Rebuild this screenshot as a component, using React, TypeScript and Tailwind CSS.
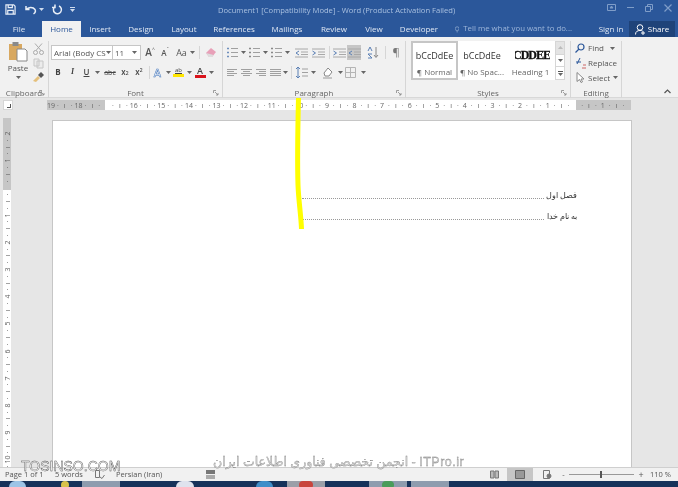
import React from "react";

const C = "#808080";
const Caret = ({ c = "#666" }: { c?: string }) => (
  <svg width="5" height="3" viewBox="0 0 5 3" className="shrink-0"><path d="M0 0h5L2.5 3z" fill={c} /></svg>
);
const Ic = ({ children, w = 13, h = 13 }: { children: React.ReactNode; w?: number; h?: number }) => (
  <svg width={w} height={h} viewBox={`0 0 ${w} ${h}`} className="shrink-0" fill="none" stroke={C} strokeWidth="1">{children}</svg>
);
const Launcher = () => (
  <svg width="6" height="6" viewBox="0 0 6 6" fill="none" stroke="#888" strokeWidth="0.8"><path d="M.5 3V.5H3M2 2l3 3M5 3v2H3" /></svg>
);
const Slot = ({ w, children, className = "" }: { w: number; children?: React.ReactNode; className?: string }) => (
  <div style={{ width: w }} className={`flex items-center justify-center shrink-0 h-[14px] ${className}`}>{children}</div>
);
const Group = ({ w, label, children }: { w: number; label: string; children: React.ReactNode }) => (
  <div style={{ width: w }} className="relative shrink-0 h-[57px] flex flex-col border-r border-[#d6d6d6]">
    <div className="flex-1 min-h-0">{children}</div>
    <div className="h-[11px] flex items-center justify-center text-[8px] leading-none text-[#666]">{label}</div>
    {label !== "Editing" ? (
      <div className="absolute right-[3px] bottom-[2px] flex"><Launcher /></div>
    ) : null}
  </div>
);
const LinesIcon = ({ kind }: { kind: "l" | "c" | "r" | "j" }) => {
  const rows: [number, number][] =
    kind === "l" ? [[1, 11], [1, 8], [1, 11], [1, 8]] :
    kind === "c" ? [[1, 12], [3, 10], [1, 12], [3, 10]] :
    kind === "r" ? [[2, 12], [5, 12], [2, 12], [5, 12]] :
    [[1, 12], [1, 12], [1, 12], [1, 12]];
  return (
    <Ic>
      {rows.map(([a, b], i) => <path key={i} d={`M${a} ${3.5 + i * 2}H${b}`} stroke="#a0a0a0" />)}
    </Ic>
  );
};
const ListIcon = ({ n }: { n?: boolean }) => (
  <Ic>
    {[2.5, 6.5, 10.5].map((y) => (
      <g key={y}>
        <path d={`M1 ${y}h2`} stroke={n ? "#888" : "#6f8fbd"} strokeWidth="1.4" />
        <path d={`M5 ${y}h7`} stroke="#a0a0a0" />
      </g>
    ))}
  </Ic>
);
const Indent = ({ rev }: { rev?: boolean }) => (
  <Ic w={15}>
    <path d="M1 3h13M7 6h7M7 8.5h7M1 11h13" stroke="#a8a8a8" />
    <path d={rev ? "M5 5L2 7l3 2" : "M1.5 5l3 2-3 2"} stroke="#5b80b5" />
  </Ic>
);

const tabs: [string, number][] = [["Insert", 38], ["Design", 44], ["Layout", 42], ["References", 58], ["Mailings", 48], ["Review", 46], ["View", 34], ["Developer", 56]];
const hNums: string[] = ["19", "18", "", "16", "15", "14", "13", "12", "11", "10", "9", "8", "7", "6", "5", "4", "3", "2", "1", "", "1"];
const vNums: string[] = ["2", "1", "", "1", "2", "3", "4", "5", "6", "7", "8", "9", "10"];

const HRuler = () => (
  <div className="flex h-[10px] items-center text-[7px] leading-none text-[#555]">
    {hNums.map((n, i) => (
      <div key={i} className="flex w-[27.6px] shrink-0">
        {[n, "·", "ı", "·"].map((t, j) => (
          <span key={j} className="w-[6.9px] flex justify-center whitespace-nowrap text-[#666]">{t}</span>
        ))}
      </div>
    ))}
  </div>
);
const VRuler = () => (
  <div className="w-[8px] ml-[3px] h-full shrink-0 bg-white relative overflow-hidden text-[7px] leading-none text-[#555]">
    <div className="h-[72px] bg-[#c6c6c6] -mb-[72px]" />
    <div className="pt-[12px] relative">
      {vNums.map((n, i) => (
        <div key={i} className="flex flex-col w-full h-[27.2px]">
          {[n, "·", "ı", "·"].map((t, j) => (
            <span key={j} className="h-[6.8px] flex items-center justify-center -rotate-90 text-[#666]">{t}</span>
          ))}
        </div>
      ))}
    </div>
  </div>
);

const StyleBox = ({ w, label, sel, children }: { w: number; label: string; sel?: boolean; children: React.ReactNode }) => (
  <div style={{ width: w }} className={`shrink-0 h-full flex flex-col items-center overflow-hidden border-[2px] ${sel ? "border-[#c6c6c6]" : "border-white"}`}>
    <div className="h-[20px] flex items-end justify-center overflow-hidden w-full">{children}</div>
    <div className="mt-[5px] text-[8px] leading-none text-[#666] whitespace-nowrap">{label}</div>
  </div>
);

export default function App() {
  return (
    <div className="w-[678px] h-[487px] overflow-hidden relative flex flex-col bg-[#e6e6e6] blur-[0.3px] font-['Open_Sans','Liberation_Sans',sans-serif]">
      {/* Title bar */}
      <div className="h-[37px] shrink-0 bg-[#2b579a] flex flex-col text-white">
        <div className="h-[21px] flex items-center">
          <div className="flex items-center pl-[5px] w-[80px] shrink-0 h-full pb-[2px]">
            <svg width="11" height="11" viewBox="0 0 12 12" fill="none" stroke="#e8eef7" strokeWidth="1.3"><path d="M1 1h8.5L11 2.5V11H1zM3.5 1v3h4.5V1M3 11V7h6v4" /></svg>
            <svg className="ml-[9px]" width="12" height="10" viewBox="0 0 12 10" fill="none" stroke="#e8eef7" strokeWidth="1.5"><path d="M1 1v3.5h3.5M1.5 4.5C3 2 8 1.5 10 4.5c1 2 0 3.5-1.500 4.500" /></svg>
            <div className="ml-[2px]"><Caret c="#cfdcee" /></div>
            <svg className="ml-[8px]" width="11" height="11" viewBox="0 0 11 11" fill="none" stroke="#e8eef7" strokeWidth="1.5"><path d="M3 2.500A4 4 0 1 0 7 2M3 .5v3H0" /></svg>
            <div className="ml-[7px] flex flex-col items-center gap-[1px]"><div className="w-[5px] h-px bg-[#cfdcee]" /><Caret c="#cfdcee" /></div>
          </div>
          <div className="ml-[138px] text-[7.600px] leading-none text-[#a9c0e0] whitespace-nowrap pt-[1px]">Document1 [Compatibility Mode] - Word (Product Activation Failed)</div>
          <div className="ml-auto flex items-center pr-[6px] gap-[11px] h-full pb-[6px]">
            <svg width="9" height="7" viewBox="0 0 9 7" fill="none" stroke="#7f9dc8"><path d="M.5.5h8v6h-8z" /><path d="M3 4l1.500-2L6 4z" fill="#7f9dc8" /></svg>
            <div className="w-[7px] h-px bg-[#7f9dc8]" />
            <svg width="8" height="8" viewBox="0 0 8 8" fill="none" stroke="#7f9dc8"><path d="M.5 2.500h5v5h-5zM2.500 2.500v-2h5v5h-2" /></svg>
            <svg width="8" height="8" viewBox="0 0 8 8" fill="none" stroke="#7f9dc8" strokeWidth="1.200"><path d="M.5.5l7 7M7.500.5l-7 7" /></svg>
          </div>
        </div>
        <div className="h-[16px] flex items-stretch text-[8px] leading-none text-[#dfe7f3]">
          <div className="w-[38px] shrink-0 flex items-center justify-center">File</div>
          <div className="ml-[4px] w-[39px] shrink-0 flex items-center justify-center bg-[#f1f1f1] text-[#2b579a]">Home</div>
          {tabs.map(([t, w]) => (
            <div key={t} style={{ width: w }} className="flex items-center justify-center shrink-0">{t}</div>
          ))}
          <div className="ml-[8px] w-[117px] shrink-0 flex items-center text-[#9db6da] whitespace-nowrap">
            <svg width="8" height="11" viewBox="0 0 8 11" fill="none" stroke="#b9cbe5"><path d="M2.500 8C2 6 .5 5.500.5 3.500a3.500 3 0 0 1 7 0C7.500 5.500 6 6 5.500 8zM3 10h2" /></svg>
            <span className="ml-[4px] text-[7.800px]">Tell me what you want to do...</span>
          </div>
          <div className="ml-[24px] w-[30px] shrink-0 flex items-center justify-center whitespace-nowrap">Sign in</div>
          <div className="ml-[3px] w-[46px] bg-[#1f4379] flex items-center justify-center gap-[3px] shrink-0">
            <svg width="10" height="11" viewBox="0 0 10 11" fill="none" stroke="#fff" strokeWidth="1"><circle cx="5" cy="3.500" r="2.800" /><path d="M.5 10.500c0-3 2-4 4.500-4s2.500.5 2.500.5M6 9h4M8 7v4" /></svg>
            <span className="text-white">Share</span>
          </div>
        </div>
      </div>

      {/* Ribbon */}
      <div className="h-[61px] shrink-0 bg-[#f1f1f1] flex pt-[4px] text-[#555] border-b border-[#d8d8d8]">
        <Group w={49} label="Clipboard">
          <div className="flex">
            <div className="w-[31px] shrink-0 flex flex-col items-center pl-[5px]">
              <svg width="20" height="21" viewBox="0 0 20 21"><rect x="1" y="3" width="13" height="16" fill="#d8a860" /><rect x="4.500" y="1" width="6" height="4" fill="#8a8a8a" /><path d="M9 8h8l2 2v10H9z" fill="#fff" stroke="#888" /></svg>
              <div className="text-[8px] leading-none text-[#555] mt-[2px]">Paste</div>
              <div className="mt-[4px]"><Caret /></div>
            </div>
            <div className="flex flex-col items-center w-[14px] gap-[3px] mt-[2px]">
              <svg width="11" height="12" viewBox="0 0 11 12" fill="none" stroke="#aaa"><path d="M2 .5l6 7M9 .5l-6 7" /><circle cx="2.500" cy="9.500" r="2" /><circle cx="8.500" cy="9.500" r="2" /></svg>
              <svg width="11" height="11" viewBox="0 0 11 11" fill="#ececec" stroke="#c6c6c6"><path d="M1 1h5v7H1zM4 3h6v7H4z" /></svg>
              <svg width="11" height="10" viewBox="0 0 11 10"><path d="M0 9l5-5 2 2-4 4z" fill="#e5c07b" /><path d="M5 3l3-3 3 3-3 3z" fill="#555" /></svg>
            </div>
          </div>
        </Group>

        <Group w={174} label="Font">
          <div className="pl-[2px] pt-[4px] flex flex-col gap-[5px]">
            <div className="flex items-center h-[15px]">
              <div className="w-[62px] h-[15px] shrink-0 bg-white border border-[#c6c6c6] flex items-center justify-between px-[2px] text-[8px] leading-none text-[#555] whitespace-nowrap">Arial (Body CS<Caret /></div>
              <div className="w-[28px] h-[15px] shrink-0 bg-white border border-l-0 border-[#c6c6c6] flex items-center justify-between px-[2px] pr-[3px] text-[8px] leading-none text-[#555]">11<Caret /></div>
              <Slot w={16} className="ml-[1px] text-[10px]"><span className="font-semibold">A</span><span className="text-[5px] mb-[5px]">^</span></Slot>
              <Slot w={14} className="text-[8px]"><span className="font-semibold">A</span><span className="text-[5px] mb-[5px]">ˇ</span></Slot>
              <Slot w={27} className="text-[9px] gap-[3px]"><span>Aa</span><Caret /></Slot>
              <div className="w-px h-[13px] bg-[#d6d6d6]" />
              <Slot w={22}>
                <svg width="12" height="11" viewBox="0 0 12 11"><path d="M1 6l5-5 5 4-4 5H4z" fill="#e8a0b8" /><path d="M1 6l3 4h3l1.500-2z" fill="#ddd" /></svg>
              </Slot>
            </div>
            <div className="flex items-center h-[14px] text-[8px] text-[#444] leading-none">
              <Slot w={14} className="font-bold">B</Slot>
              <Slot w={15} className="italic font-semibold font-['Liberation_Serif',serif]">I</Slot>
              <Slot w={13} className="underline font-semibold">U</Slot>
              <Slot w={9}><Caret /></Slot>
              <Slot w={16} className="line-through text-[7px]">abc</Slot>
              <Slot w={14} className="font-semibold">x<sub className="text-[5px]">2</sub></Slot>
              <Slot w={14} className="font-semibold">x<sup className="text-[5px]">2</sup></Slot>
              <div className="ml-[3px] w-px h-[13px] bg-[#d6d6d6]" />
              <Slot w={15} className="text-[11px] font-semibold"><span className="[-webkit-text-stroke:0.5px_#3f72b8] text-[#e4ecf7]">A</span></Slot>
              <Slot w={6}><Caret /></Slot>
              <Slot w={15}>
                <div className="flex flex-col items-center"><span className="text-[6px] leading-none underline">ab</span><div className="w-[11px] h-[3px] bg-[#ffe600] mt-[1px]" /></div>
              </Slot>
              <Slot w={6}><Caret /></Slot>
              <Slot w={16}>
                <div className="flex flex-col items-center"><span className="text-[9px] leading-none font-semibold text-[#444]">A</span><div className="w-[11px] h-[3px] bg-[#d9141c]" /></div>
              </Slot>
              <Slot w={6}><Caret /></Slot>
            </div>
          </div>
        </Group>

        <Group w={183} label="Paragraph">
          <div className="pt-[4px] flex flex-col gap-[5px]">
            <div className="flex items-center h-[15px] pl-[2px]">
              <Slot w={14}><ListIcon /></Slot><Slot w={8}><Caret /></Slot>
              <Slot w={14}><ListIcon n /></Slot><Slot w={8}><Caret /></Slot>
              <Slot w={14}><ListIcon n /></Slot><Slot w={8}><Caret /></Slot>
              <div className="w-[3px]" />
              <Slot w={17}><Indent rev /></Slot>
              <Slot w={17}><Indent /></Slot>
              <div className="w-[8px] flex justify-center"><div className="w-px h-[13px] bg-[#d6d6d6]" /></div>
              <Slot w={16}><Indent /></Slot>
              <Slot w={14} className="bg-[#c6c6c6] h-[15px]"><Indent rev /></Slot>
              <div className="w-[3px]" />
              <Slot w={21}>
                <svg width="13" height="13" viewBox="0 0 13 13" fill="none"><path d="M9 1v10M7 9l2 2.500L11 9" stroke="#888" /><path d="M1 5l2-4 2 4M1 12h4L1 8h4" stroke="#5b80b5" /></svg>
              </Slot>
              <div className="w-[5px] flex justify-center"><div className="w-px h-[13px] bg-[#d6d6d6]" /></div>
              <Slot w={18} className="text-[11px] text-[#777]">¶</Slot>
            </div>
            <div className="flex items-center h-[14px] pl-[2px]">
              <Slot w={14}><LinesIcon kind="l" /></Slot>
              <Slot w={14}><LinesIcon kind="c" /></Slot>
              <Slot w={15}><LinesIcon kind="r" /></Slot>
              <Slot w={14}><LinesIcon kind="j" /></Slot>
              <Slot w={6}><Caret /></Slot>
              <div className="w-[6px] flex justify-center"><div className="w-px h-[13px] bg-[#d6d6d6]" /></div>
              <Slot w={15}>
                <svg width="13" height="13" viewBox="0 0 13 13" fill="none"><path d="M3 1v11M1 3l2-2 2 2M1 10l2 2 2-2" stroke="#5b80b5" /><path d="M7 3h6M7 6.500h6M7 10h6" stroke="#a0a0a0" /></svg>
              </Slot>
              <Slot w={8}><Caret /></Slot>
              <div className="w-[3px]" />
              <Slot w={17}>
                <svg width="13" height="13" viewBox="0 0 13 13" fill="none" stroke="#888"><path d="M2 7l4-5 4 4-3 4H3z" fill="#fff" /><path d="M1 12h9" stroke="#c6c6c6" strokeWidth="2" /></svg>
              </Slot>
              <Slot w={6}><Caret /></Slot>
              <Slot w={15}>
                <svg width="11" height="11" viewBox="0 0 11 11" fill="none" stroke="#b5b5b5"><path d="M.5.5h10v10H.5zM5.500.5v10M.5 5.500h10" /></svg>
              </Slot>
              <Slot w={10}><Caret /></Slot>
            </div>
          </div>
        </Group>

        <Group w={165} label="Styles">
          <div className="pl-[5px] flex h-[39px]">
            <div className="w-[144px] h-[39px] bg-white flex shrink-0 overflow-hidden text-[#333]">
              <StyleBox w={47} label="¶ Normal" sel><span className="text-[9px] leading-[14px]">bCcDdEe</span></StyleBox>
              <StyleBox w={48} label="¶ No Spac..."><span className="text-[9px] leading-[14px]">bCcDdEe</span></StyleBox>
              <StyleBox w={49} label="Heading 1">
                <div className="w-[35px] mr-[3px] ml-auto flex justify-end overflow-hidden"><span className="text-[12px] leading-[15px] font-bold text-[#111] tracking-[-1px] font-['Liberation_Serif',serif] whitespace-nowrap [-webkit-text-stroke:0.3px_#111]">CDDEE</span></div>
              </StyleBox>
            </div>
            <div className="w-[10px] h-[39px] flex flex-col shrink-0 border border-[#d6d6d6] bg-white">
              <div className="flex-1 bg-[#e4e4e4] flex items-center justify-center"><div className="rotate-180 flex"><Caret c="#bbb" /></div></div>
              <div className="flex-1 flex items-center justify-center border-y border-[#d6d6d6]"><Caret /></div>
              <div className="flex-1 flex flex-col items-center justify-center gap-[1px]"><div className="w-[5px] h-px bg-[#555]" /><Caret /></div>
            </div>
          </div>
        </Group>

        <Group w={51} label="Editing">
          <div className="pl-[4px] flex flex-col text-[8px] leading-none text-[#555] whitespace-nowrap">
            <div className="flex items-center h-[14px] gap-[3px]">
              <svg width="10" height="10" viewBox="0 0 10 10" fill="none" stroke="#2b579a" strokeWidth="1.200"><circle cx="6" cy="4" r="3" /><path d="M4 6L.5 9.500" /></svg>
              <span>Find</span><span className="ml-[3px] flex"><Caret /></span>
            </div>
            <div className="flex items-center h-[15px] gap-[1px]">
              <svg width="12" height="12" viewBox="0 0 12 12" fill="none"><path d="M2 7l3-6" stroke="#2b579a" /><path d="M8 8h3M7 11h4" stroke="#c66" /><path d="M1 5h5" stroke="#2b579a" /></svg>
              <span>Replace</span>
            </div>
            <div className="flex items-center h-[15px] gap-[3px] pl-[1px]">
              <svg width="9" height="11" viewBox="0 0 9 11" fill="#fff" stroke="#888"><path d="M1 .5v9l2.500-2 1.500 3 1.500-.7L5 7h3z" /></svg>
              <span>Select</span><Caret />
            </div>
          </div>
        </Group>

        <div className="flex-1 flex items-end justify-end pr-[7px] pb-[3px]">
          <svg width="7" height="5" viewBox="0 0 7 5" fill="none" stroke="#555" strokeWidth="1.200"><path d="M.5 4L3.500 1l3 3" /></svg>
        </div>
      </div>

      {/* Document area */}
      <div className="flex-1 min-h-0 flex flex-col">
        <div className="h-[20px] shrink-0 flex items-start pt-[2px]">
          <div className="ml-[3px] w-[10px] h-[10px] shrink-0 bg-white border border-[#d6d6d6] flex items-end justify-end p-[1px]">
            <div className="w-[4px] h-[4px] border-r border-b border-[#555]" />
          </div>
          <div className="ml-[34px] w-[584px] h-[10px] shrink-0 bg-[#c6c6c6] overflow-hidden relative">
            <div className="absolute left-[58px] w-[471px] top-0 bottom-0 bg-white" />
            <div className="relative ml-[0.5px]"><HRuler /></div>
          </div>
        </div>
        <div className="flex-1 min-h-0 flex">
          <VRuler />
          <div className="ml-[41px] mt-[2px] w-[580px] bg-white border border-[#c6c6c6] border-b-0 h-[400px] shrink-0 pt-[69px] pl-[249px] pr-[54px] text-[#333] font-['Liberation_Sans',sans-serif]">
            <div className="flex items-center h-[11px]">
              <div className="flex-1 border-b border-dotted border-[#999] mt-[6px]" />
              <div dir="rtl" className="w-[33px] whitespace-nowrap leading-none text-[8px]">فصل اول</div>
            </div>
            <div className="flex items-center h-[11px] mt-[10px]">
              <div className="flex-1 border-b border-dotted border-[#999] mt-[6px]" />
              <div dir="rtl" className="w-[33px] whitespace-nowrap leading-none text-[7.500px]">به نام خدا</div>
            </div>
          </div>
        </div>
      </div>

      {/* Status bar */}
      <div className="h-[14px] shrink-0 bg-[#f1f1f1] border-t border-[#cfcfcf] flex items-center text-[7.500px] leading-none text-[#555] whitespace-nowrap">
        <span className="ml-[5px] w-[50px] shrink-0">Page 1 of 1</span>
        <span className="w-[40px] shrink-0">5 words</span>
        <svg width="10" height="9" viewBox="0 0 10 9" fill="none" stroke="#777"><path d="M.5.5h4v7h-4zM5 7l2 1.500L9.500 5" /></svg>
        <span className="ml-[11px] w-[90px] shrink-0">Persian (Iran)</span>
        <svg width="9" height="9" viewBox="0 0 9 9"><rect width="9" height="4" y="0" fill="#777" /><rect y="5" width="9" height="4" fill="#aaa" /></svg>
        <div className="ml-auto flex items-center h-full">
          <svg width="9" height="9" viewBox="0 0 9 9" fill="#bbb" stroke="#777"><path d="M.5 1h3.500v7H.5zM5 1h3.500v7H5z" /></svg>
          <div className="ml-[8px] w-[26px] h-full bg-[#c6c6c6] flex items-center justify-center">
            <svg width="10" height="9" viewBox="0 0 10 9" fill="#999" stroke="#666"><path d="M.5.5h9v8h-9z" /></svg>
          </div>
          <div className="ml-[10px]">
            <svg width="9" height="9" viewBox="0 0 9 9" fill="none" stroke="#777"><path d="M.5.5h6v8h-6z" /><circle cx="6" cy="6" r="2" fill="#777" /></svg>
          </div>
          <span className="ml-[9px] w-[5px] text-center">-</span>
          <div className="ml-[3px] w-[65px] h-px bg-[#999] flex justify-center items-center">
            <div className="w-[2px] h-[7px] bg-[#555]" />
          </div>
          <span className="ml-[4px] text-[9px] w-[6px] text-center">+</span>
          <span className="ml-[6px] mr-[7px]">110 %</span>
        </div>
      </div>

      {/* Taskbar */}
      <div className="h-[6px] shrink-0 bg-[#16325a] flex items-start overflow-hidden">
        <div className="ml-[9px] w-[17px] h-[12px] rounded-full bg-[#9cc4e6]" />
        <div className="ml-[35px] w-[8px] h-[8px] rounded-full bg-[#d9c24a]" />
        <div className="ml-[13px] w-[38px] h-full bg-[#8e9cae]" />
        <div className="ml-[56px] w-[18px] h-[12px] rounded-full bg-[#dfe3ee]" />
        <div className="ml-[62px] w-[17px] h-[12px] rounded-full bg-[#3f8ec9]" />
        <div className="ml-[14px] w-[38px] h-full bg-[#9a9fa8] flex justify-center"><div className="w-[14px] h-[8px] rounded-full bg-[#c9453d]" /></div>
        <div className="ml-[44px] w-[38px] h-full bg-[#8e9cae] flex justify-center"><div className="w-[12px] h-[8px] rounded-full bg-[#4a9c5a]" /></div>
        <div className="ml-[4px] w-[38px] h-full bg-[#8e9cae]" />
      </div>

      {/* Marker stroke drawn over the page */}
      <svg className="absolute left-0 top-0 pointer-events-none" width="678" height="487" fill="none">
        <path d="M298.500 98 C297.500 140 297.500 170 298 185 C298.500 200 301 215 301.500 229" stroke="#ffff00" strokeWidth="5" />
      </svg>

      {/* Watermarks */}
      <div className="absolute left-[21px] top-[459px] text-[14px] leading-none text-white [-webkit-text-stroke:0.4px_#444] font-['Liberation_Sans',sans-serif] whitespace-nowrap">TOSINSO.COM</div>
      <div dir="ltr" className="absolute left-[213px] top-[456px] w-[252px] text-[12.500px] leading-none text-[#d8d8d8] [-webkit-text-stroke:0.3px_#777] font-['Liberation_Sans','DejaVu_Sans',sans-serif] whitespace-nowrap tracking-[0.5px]">انجمن تخصصی فناوری اطلاعات ایران - ITPro.ir</div>
    </div>
  );
}
